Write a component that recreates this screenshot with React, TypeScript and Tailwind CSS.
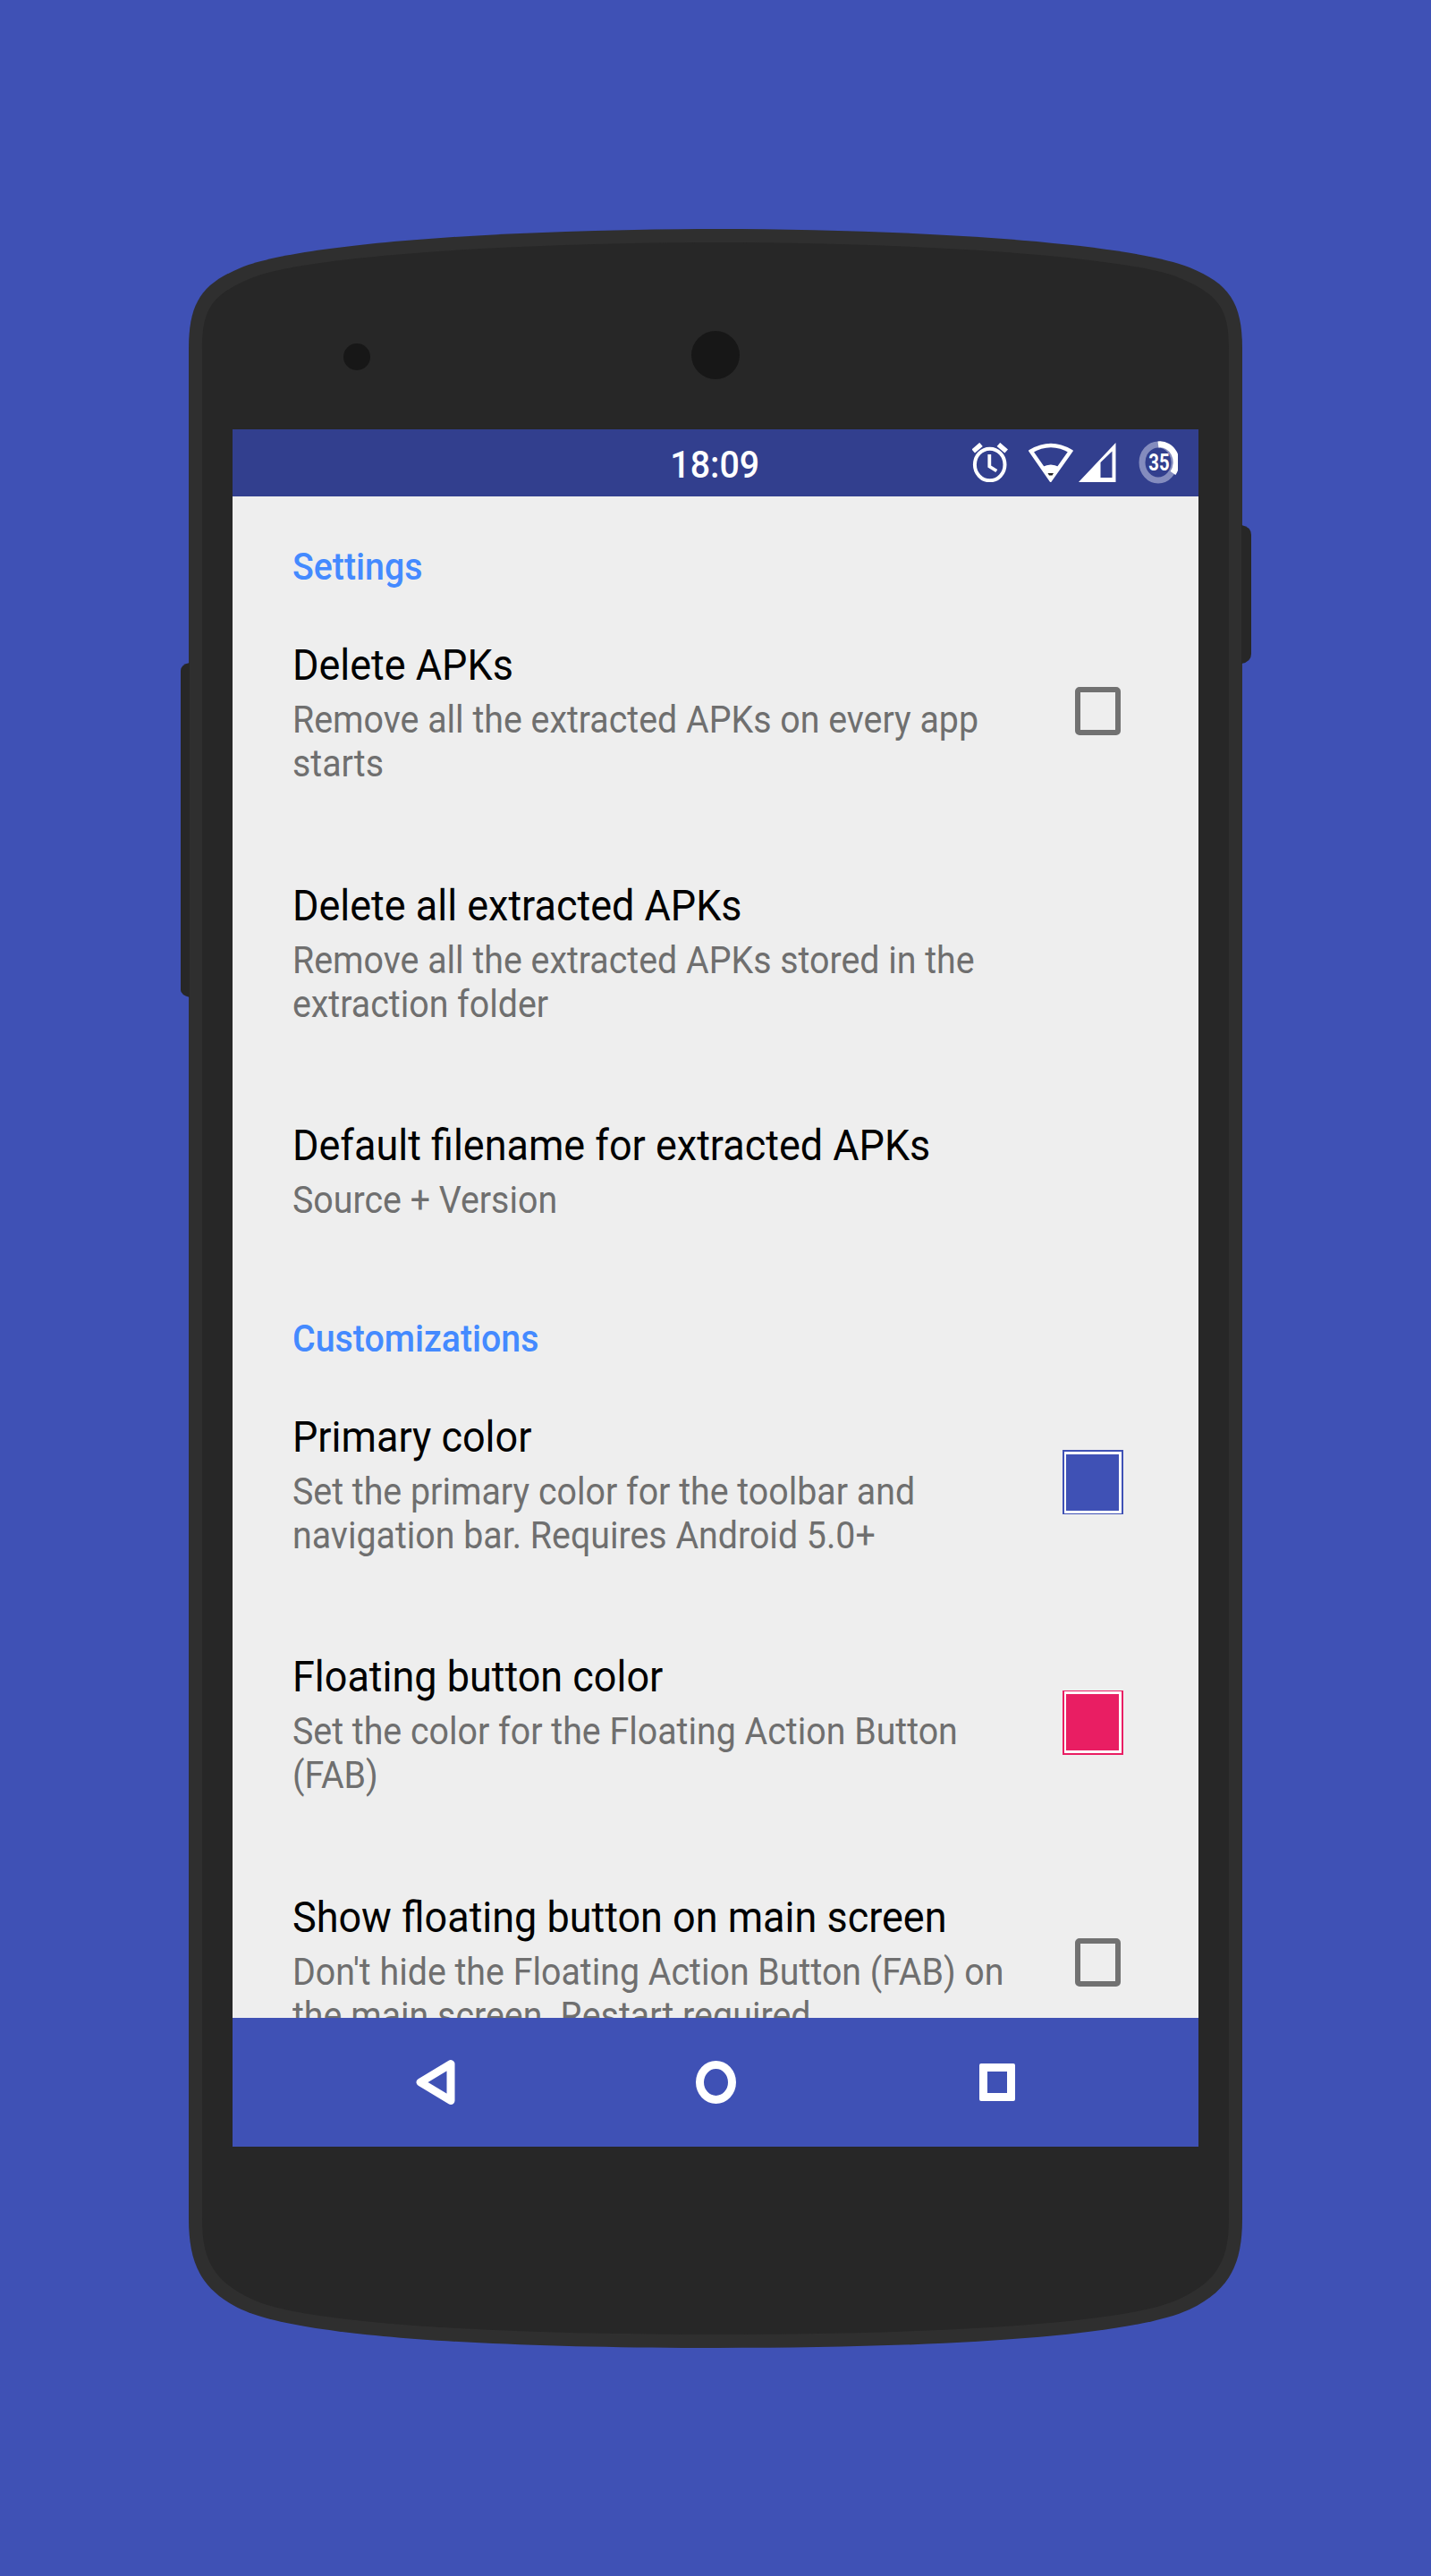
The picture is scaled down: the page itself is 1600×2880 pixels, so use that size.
import type { ReactNode } from "react";

function Category({ children }: { children: ReactNode }) {
  return (
    <h2 className="origin-left scale-x-[0.936] pt-[48px] pb-[9px] text-[42px] leading-[49px] font-medium text-[#448aff]">
      {children}
    </h2>
  );
}

function Preference({
  title,
  lines,
  widget,
}: {
  title: string;
  lines: string[];
  widget?: ReactNode;
}) {
  return (
    <div className="flex shrink-0 justify-between pt-[48px] pb-[57.5px]">
      <div className="origin-left scale-x-[0.9365] whitespace-nowrap">
        <h3 className="pt-px text-[48px] leading-[56px] text-black">{title}</h3>
        <p className="mt-[8px] text-[42px] leading-[49px] text-[#6f6f6f]">
          {lines.map((line) => (
            <span key={line} className="block">
              {line}
            </span>
          ))}
        </p>
      </div>
      {widget}
    </div>
  );
}

function Checkbox() {
  return (
    <div className="mt-[52.5px] mr-[87px] h-[54px] w-[51px] rounded-[5px] border-6 border-[#717171]" />
  );
}

function AlarmIcon() {
  return (
    <svg className="h-[44px] w-[40px]" viewBox="0 0 40 44" fill="none" stroke="#fff">
      <ellipse cx="19.7" cy="24.5" rx="16.8" ry="17.8" strokeWidth="4" />
      <path d="M19.300 13v13.500l8 5" strokeWidth="3.800" />
      <path d="M1.200 9.500L10 2M38.200 9.500L29.400 2" strokeWidth="5.500" />
    </svg>
  );
}

function WifiIcon() {
  return (
    <svg className="h-[44px] w-[50px]" viewBox="0 0 50 44">
      <path
        d="M2.800 9.500Q25 -3.500 47 9.500L24.700 41Z"
        fill="none"
        stroke="#fff"
        strokeWidth="4.400"
      />
      <path d="M15.500 27Q25 22 34 27L24.700 43Z" fill="#fff" />
      <path d="M21.500 34h6.500l-1.500 2.500h-3.500z" fill="#222" />
    </svg>
  );
}

function SignalIcon() {
  return (
    <svg className="h-[44px] w-[42px]" viewBox="0 0 42 44">
      <path d="M0 44L41.500 0V44ZM24.500 22V39H37.500V9.500Z" fill="#fff" fillRule="evenodd" />
    </svg>
  );
}

function BatteryIcon() {
  return (
    <div className="relative flex h-[48px] w-[44px] items-center justify-center">
      <svg className="absolute inset-0" viewBox="0 0 44 48" fill="none" strokeWidth="7">
        <ellipse cx="22" cy="24" rx="18" ry="20" stroke="#848cbe" />
        <path d="M22 4A18 20 0 0 1 38.500 36" stroke="#fff" />
      </svg>
      <span className="relative left-px scale-x-[0.78] text-[26px] leading-none font-bold text-white">
        35
      </span>
    </div>
  );
}

function StatusBar() {
  return (
    <header className="grid h-[75px] shrink-0 grid-cols-[1fr_auto_1fr] items-center bg-[#323f8e]">
      <span />
      <time className="relative -left-px scale-x-[0.9375] pt-[3px] text-[42px] leading-[49px] font-medium text-white">
        18:09
      </time>
      <div className="flex items-center justify-end pr-[23px] pb-px">
        <AlarmIcon />
        <span className="w-[23px]" />
        <WifiIcon />
        <span className="w-[6px]" />
        <SignalIcon />
        <span className="w-[25px]" />
        <BatteryIcon />
      </div>
    </header>
  );
}

function NavigationBar() {
  return (
    <nav className="flex h-[144px] shrink-0 items-center bg-[#3f51b5] pl-[204px]">
      <svg className="h-[52px] w-[45px]" viewBox="0 0 45 52">
        <path
          d="M40 5.500V46.500L6 26Z"
          fill="none"
          stroke="#fff"
          strokeWidth="9"
          strokeLinejoin="round"
        />
      </svg>
      <div className="ml-[269px] h-[48px] w-[45px] rounded-[50%] border-9 border-white" />
      <div className="ml-[272px] h-[42px] w-[40px] rounded-[2px] border-9 border-white" />
    </nav>
  );
}

function PhoneBody() {
  return (
    <svg className="absolute inset-0" width="1600" height="2880" viewBox="0 0 1600 2880">
      <path
        fill="#2f2f2f"
        d="M211 390C211 338 226 317 270 299C340 271 580 256 800 256S1260 271 1330 299C1374 317 1389 338 1389 390V2480C1389 2530 1376 2560 1330 2582C1265 2612 1060 2625 800 2625S335 2612 270 2582C224 2560 211 2530 211 2480Z"
      />
      <path
        fill="#272727"
        d="M226 390C226 345 237 329 283 310C345 286 580 271 800 271S1255 286 1317 310C1363 329 1374 345 1374 390V2480C1374 2525 1363 2550 1317 2571C1260 2598 1040 2610 800 2610S340 2598 283 2571C237 2550 226 2525 226 2480Z"
      />
      <path fill="#272727" d="M1388 587Q1399 589 1399 598V731Q1399 740 1388 742Z" />
      <path fill="#272727" d="M212 741Q202 743 202 750V1107Q202 1112 212 1115Z" />
      <circle cx="399" cy="399" r="15" fill="#171717" />
      <circle cx="800" cy="397" r="27" fill="#171717" />
    </svg>
  );
}

export default function App() {
  return (
    <div className="relative h-[2880px] w-[1600px] overflow-hidden bg-[#3f51b5] pt-[480px] font-['Roboto',sans-serif]">
      <PhoneBody />
      <div className="relative mx-auto flex h-[1920px] w-[1080px] flex-col">
        <StatusBar />
        <main className="flex min-h-0 flex-1 flex-col overflow-hidden bg-[#eeeeee] pt-[6px] pl-[67px]">
          <Category>Settings</Category>
          <Preference
            title="Delete APKs"
            lines={["Remove all the extracted APKs on every app", "starts"]}
            widget={<Checkbox />}
          />
          <Preference
            title="Delete all extracted APKs"
            lines={["Remove all the extracted APKs stored in the", "extraction folder"]}
          />
          <Preference title="Default filename for extracted APKs" lines={["Source + Version"]} />
          <Category>Customizations</Category>
          <Preference
            title="Primary color"
            lines={["Set the primary color for the toolbar and", "navigation bar. Requires Android 5.0+"]}
            widget={
              <div className="mt-[43.5px] mr-[84px] h-[72px] w-[68px] border-2 border-b border-[#3f51b5]">
                <div className="h-full border-[3px] border-l-2 border-white bg-[#3f51b5]" />
              </div>
            }
          />
          <Preference
            title="Floating button color"
            lines={["Set the color for the Floating Action Button", "(FAB)"]}
            widget={
              <div className="mt-[43.5px] mr-[84px] h-[72px] w-[68px] border-2 border-t border-[#e91e63]">
                <div className="h-full border-[3px] border-l-2 border-white bg-[#e91e63]" />
              </div>
            }
          />
          <Preference
            title="Show floating button on main screen"
            lines={["Don't hide the Floating Action Button (FAB) on", "the main screen. Restart required."]}
            widget={<Checkbox />}
          />
        </main>
        <NavigationBar />
      </div>
    </div>
  );
}
